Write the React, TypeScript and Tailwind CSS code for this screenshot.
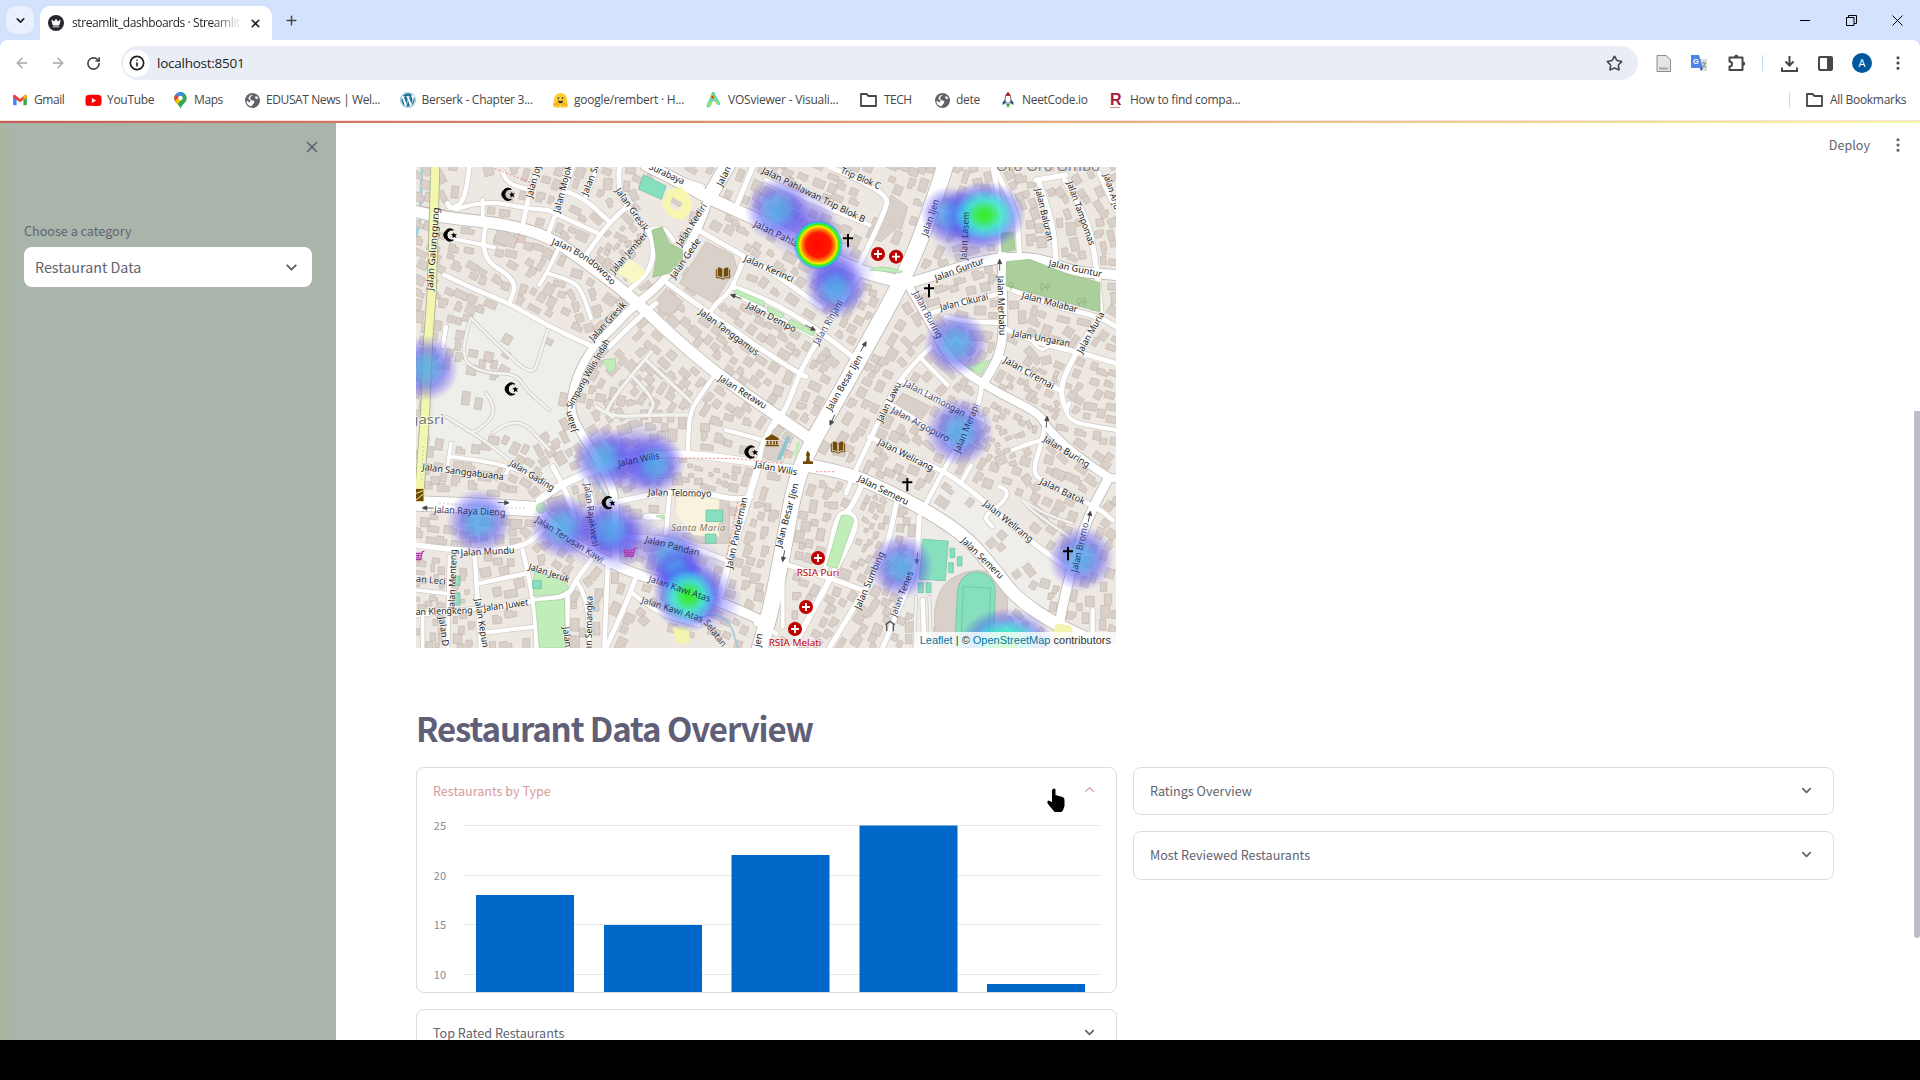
import React from "react";
import {
  ArrowLeft, ArrowRight, RotateCw, Info, Star, X, Plus, ChevronDown, ChevronUp,
  EllipsisVertical, Crown,
} from "lucide-react";
import { FaWordpress, FaYoutube } from "react-icons/fa";

type Pt = [number, number];
type Road = { w: number; p: Pt[] };

/* ---------- map data (3 units per CSS pixel) ---------- */
const r = (w: number, ...n: number[]): Road => {
  const p: Pt[] = [];
  for (let i = 0; i < n.length; i += 2) p.push([n[i], n[i + 1]]);
  return { w, p };
};

const roads: Road[] = [
  r(14, 160, 21, 150, 120, 105, 150, 95, 130), r(13, 120, 148, 200, 120, 330, 145, 395, 150), r(12, 200, 120, 200, 185),
  r(14, 365, 21, 340, 100, 320, 195), r(14, 470, 21, 435, 120, 395, 225), r(13, 395, 150, 545, 220),
  r(14, 445, 92, 500, 110, 580, 185), r(14, 545, 21, 510, 110), r(14, 632, 140, 580, 185, 510, 285),
  r(15, 610, 21, 605, 85, 632, 140, 700, 210, 715, 270, 700, 335, 645, 385), r(12, 700, 210, 740, 195, 775, 245),
  r(14, 210, 195, 185, 290, 305, 360, 280, 430), r(14, 85, 345, 180, 390, 280, 430, 400, 500, 530, 560),
  r(12, 430, 260, 400, 325, 370, 375), r(12, 395, 340, 470, 360, 500, 400, 525, 475), r(13, 260, 35, 270, 70, 340, 88),
  r(11, 110, 235, 235, 262), r(13, 90, 500, 80, 560), r(14, 640, 405, 545, 350, 510, 285),
  r(15, 755, 370, 850, 440, 940, 500, 1050, 578, 1150, 640, 1170, 650), r(15, 855, 215, 950, 270, 1050, 325, 1130, 380, 1215, 440),
  r(15, 950, 380, 1050, 415, 1200, 505, 1310, 590), r(10, 960, 405, 1050, 450, 1190, 530), r(14, 985, 290, 950, 390, 900, 430, 880, 460),
  r(15, 1010, 21, 960, 140), r(14, 800, 60, 860, 80), r(15, 580, 560, 660, 480, 720, 430), r(13, 1050, 60, 1200, 130, 1360, 195),
  r(15, 1240, 21, 1420, 95, 1405, 160, 1330, 315), r(15, 1330, 340, 1280, 420, 1200, 550, 1150, 640, 1110, 750, 1070, 800),
  r(14, 1730, 21, 1750, 110, 1755, 290), r(15, 1735, 21, 1780, 110, 1805, 180, 1810, 280), r(15, 1530, 140, 1640, 170, 1755, 180),
  r(16, 1870, 70, 1910, 180, 1920, 300), r(15, 1860, 60, 1950, 45), r(16, 1945, 60, 2010, 160, 2040, 300, 2055, 460), r(14, 2050, 40, 2100, 150),
  r(14, 1545, 460, 1650, 425, 1755, 400), r(14, 1590, 470, 1640, 485, 1755, 488), r(15, 1765, 380, 1900, 435, 2050, 470, 2100, 500),
  r(16, 2050, 470, 1970, 590, 1930, 690, 1950, 750), r(15, 1765, 505, 1850, 545, 2000, 580, 2100, 610), r(15, 1755, 590, 1850, 650, 1930, 690),
  r(10, 1850, 545, 1870, 570, 1895, 565, 1900, 550), r(14, 1545, 560, 1450, 650, 1385, 790, 1310, 950, 1290, 1000), r(13, 1455, 660, 1600, 740, 1700, 780),
  r(12, 1510, 590, 1595, 675), r(14, 1700, 660, 1690, 750, 1610, 880, 1525, 1040), r(13, 1420, 730, 1520, 790, 1600, 850),
  r(15, 1360, 830, 1480, 890, 1590, 935, 1700, 1020, 1850, 1150, 1950, 1220), r(12, 1665, 915, 1640, 960), r(12, 1750, 980, 1780, 990, 1760, 1030, 1700, 1070, 1730, 1100),
  r(14, 1890, 780, 1880, 840, 1850, 930, 1870, 960, 2040, 1040, 2090, 1080), r(12, 1960, 730, 1930, 780, 2100, 810), r(12, 1880, 840, 1840, 850, 1790, 870),
  r(15, 1440, 1030, 1420, 1160, 1340, 1300, 1240, 1464), r(15, 1510, 1070, 1505, 1220, 1450, 1340, 1400, 1464),
  r(16, 1335, 980, 1300, 1060, 1265, 1060, 1240, 1180, 1225, 1240), r(18, 1300, 1060, 1325, 1075, 1300, 1150, 1240, 1260, 1130, 1464), r(15, 1100, 1210, 1230, 1250, 1340, 1290),
  r(14, 1020, 1390, 1080, 1420), r(14, 1520, 1320, 1525, 1464), r(13, 2030, 1350, 2030, 1464),
  r(22, 370, 1020, 420, 980, 560, 920, 680, 885, 820, 880, 1000, 905, 1160, 930), r(11, 100, 890, 280, 910, 400, 985), r(11, 105, 850, 95, 920),
  r(11, 270, 940, 290, 900), r(15, 410, 920, 450, 990, 475, 1070), r(14, 510, 960, 540, 1060, 530, 1190), r(16, 590, 1030, 700, 1000, 850, 995, 960, 1020, 1005, 1010),
  r(13, 760, 1010, 750, 1120), r(18, 690, 1070, 750, 1070), r(15, 610, 1130, 750, 1130, 850, 1170, 930, 1200), r(20, 1030, 910, 980, 1070, 940, 1200, 910, 1310),
  r(16, 0, 1155, 130, 1175, 320, 1165, 380, 1110), r(14, 175, 1175, 195, 1464), r(14, 320, 1170, 355, 1320, 362, 1464), r(13, 190, 1270, 330, 1240),
  r(14, 190, 1350, 355, 1320, 455, 1310, 480, 1260, 525, 1200), r(14, 455, 1310, 452, 1464), r(13, 0, 1365, 190, 1345), r(12, 190, 1420, 355, 1400), r(13, 480, 1260, 515, 1310, 520, 1464),
  r(14, 575, 1220, 565, 1464), r(15, 660, 1250, 640, 1310, 570, 1464), r(13, 650, 1300, 720, 1360, 850, 1395), r(11, 20, 1370, 20, 1464), r(11, 100, 1190, 95, 1464), r(11, 0, 1290, 90, 1300),
  r(13, 900, 640, 850, 710, 820, 760, 815, 880),
  r(13, 930, 810, 1040, 840), r(15, 1090, 760, 1040, 840, 1030, 900), r(12, 1100, 1240, 1100, 1400),
];

const majors: Road[] = [
  r(34, 0, 155, 60, 170, 270, 192, 400, 230, 500, 300, 640, 405, 760, 520, 900, 640, 1050, 745, 1180, 835),
  r(36, 690, 15, 800, 70, 890, 120, 1050, 190, 1170, 255, 1330, 335, 1450, 365),
  r(44, 935, 15, 880, 110), r(24, 880, 110, 850, 215, 740, 370, 650, 440, 590, 505, 530, 560, 480, 650, 460, 750, 495, 820, 565, 930, 600, 1010, 598, 1210),
  r(48, 1590, 10, 1530, 200, 1455, 370, 1350, 560, 1250, 740, 1180, 860, 1135, 980, 1105, 1150, 1065, 1350, 1030, 1470),
  r(30, 1460, 375, 1560, 345, 1700, 300, 1820, 290, 1900, 305, 1970, 335, 2100, 345),
  r(26, 1757, 280, 1765, 500, 1750, 590, 1705, 665), r(24, 1485, 390, 1550, 500, 1590, 580, 1650, 640, 1750, 700, 1870, 760, 1890, 800, 1960, 870, 2080, 955, 2100, 955),
  r(38, 1160, 915, 1270, 930, 1400, 985, 1530, 1050, 1650, 1130, 1730, 1220, 1800, 1315, 1930, 1400, 2100, 1475),
  r(28, 2075, 960, 2020, 1060, 1980, 1180, 1950, 1290, 1930, 1390),
  r(44, 0, 1030, 200, 1038, 370, 1048), r(28, 365, 1045, 420, 1115, 560, 1200, 680, 1250, 900, 1320, 1045, 1385),
];

const openLanes: Road[] = [
  r(8, 165, 475, 250, 560, 350, 650, 370, 590, 395, 510), r(8, 165, 475, 125, 590, 200, 640, 300, 640, 330, 690, 400, 750), r(8, 210, 700, 250, 750, 180, 820, 150, 810),
  r(8, 90, 770, 190, 830, 280, 900), r(8, 230, 820, 300, 760, 400, 870), r(7, 1820, 1020, 1880, 1060, 1970, 1090), r(7, 1820, 1020, 1830, 1040, 1960, 1130),
  r(7, 1500, 1310, 1495, 1464), r(7, 1540, 1310, 1545, 1464),
  r(10, 707, 575, 560, 745, 590, 772), r(10, 690, 600, 830, 730), r(10, 540, 740, 580, 772, 690, 765, 830, 765), r(10, 650, 650, 720, 720, 700, 760),
];

/* areas that stay almost free of buildings: cx, cy, rx, ry */
const open: number[][] = [
  [310, 530, 170, 85], [420, 620, 110, 100], [150, 740, 120, 130], [330, 730, 110, 120], [200, 60, 90, 90], [780, 130, 110, 100], [740, 300, 90, 80], [880, 330, 130, 120],
  [1900, 370, 170, 80], [1400, 180, 90, 170], [1720, 1060, 130, 70], [1800, 1170, 150, 90], [1650, 1250, 180, 190], [380, 1350, 90, 120], [850, 1090, 100, 90], [1270, 1150, 50, 90], [800, 1430, 180, 60], [1480, 740, 70, 60],
  [90, 1090, 60, 20], [640, 1180, 35, 30], [990, 830, 60, 40], [1900, 1200, 60, 60],
];

/* tightly packed blocks */
const dense: number[][] = [
  [760, 950, 200, 50], [1820, 760, 130, 60], [1740, 830, 90, 70], [1380, 1130, 60, 130], [1850, 680, 120, 50], [620, 240, 90, 60], [60, 1330, 100, 130],
];

const inside = (list: number[][], x: number, y: number) =>
  list.some((o) => ((x - o[0]) / o[2]) ** 2 + ((y - o[1]) / o[3]) ** 2 < 1);

const all = [...roads, ...majors];
const pathOf = (p: Pt[]) => {
  let d = `M${p[0][0]} ${p[0][1]}`;
  for (let i = 1; i < p.length - 1; i++) {
    const mx = (p[i][0] + p[i + 1][0]) / 2;
    const my = (p[i][1] + p[i + 1][1]) / 2;
    d += `Q${p[i][0]} ${p[i][1]} ${mx} ${my}`;
  }
  const e = p[p.length - 1];
  return d + `L${e[0]} ${e[1]}`;
};

function makeBuildings(): string {
  let s = 9871;
  const rnd = () => {
    s = (s * 1664525 + 1013904223) % 4294967296;
    return s / 4294967296;
  };
  const placed: number[][] = [];
  let d = "";
  for (let k = 0; k < 15000; k++) {
    const x = rnd() * 2100;
    const y = 15 + rnd() * 1450;
    const packed = inside(dense, x, y);
    const f = packed ? 0.72 : 1.08;
    const w = (18 + rnd() * 19) * f;
    const h = (15 + rnd() * 12) * f;
    const keep = rnd();
    if (keep > 0.03 && inside(open, x, y)) continue;
    const rad = Math.max(w, h) / 2;
    if (placed.some((q) => Math.hypot(q[0] - x, q[1] - y) < (q[2] + rad) * (packed ? 0.86 : 0.94) + 1)) continue;
    let best = 1e9;
    let ang = 0;
    for (const road of all) {
      for (let i = 1; i < road.p.length; i++) {
        const [ax, ay] = road.p[i - 1];
        const [bx, by] = road.p[i];
        const dx = bx - ax;
        const dy = by - ay;
        const t = Math.max(0, Math.min(1, ((x - ax) * dx + (y - ay) * dy) / (dx * dx + dy * dy)));
        const dist = Math.hypot(x - ax - t * dx, y - ay - t * dy) - road.w / 2;
        if (dist < best) {
          best = dist;
          ang = Math.atan2(dy, dx);
        }
      }
    }
    if (best < h / 2 + 3) continue;
    placed.push([x, y, rad]);
    const c = Math.cos(ang);
    const n = Math.sin(ang);
    const pt = (u: number, v: number) => `${(x + u * c - v * n).toFixed(1)} ${(y + u * n + v * c).toFixed(1)}`;
    const a = w / 2;
    const b = h / 2;
    d += keep > 0.7
      ? `M${pt(-a, -b)}L${pt(a * 0.3, -b)}L${pt(a * 0.3, -b * 0.4)}L${pt(a, -b * 0.4)}L${pt(a, b)}L${pt(-a, b)}Z`
      : `M${pt(-a, -b)}L${pt(a, -b)}L${pt(a, b)}L${pt(-a, b)}Z`;
  }
  return d;
}
const buildings = makeBuildings();

/* street names: text, baseline start, baseline end */
type Label = [string, number, number, number, number];
const labels: Label[] = [
  ["Jalan Galunggung", 50, 392, 70, 143], ["Jalan Joy", 348, 115, 376, 15], ["Jalan Mojok", 430, 160, 468, 18], ["Jalan Sit", 514, 108, 552, 12],
  ["Jalan Gresik", 597, 92, 684, 216], ["Jalan Jember", 595, 342, 696, 226], ["Jalan Kediri", 795, 260, 874, 138], ["Jalan Gede", 776, 358, 855, 243],
  ["Surabaya", 697, 26, 800, 74], ["Jalan", 918, 80, 946, 25], ["Jalan Gresik", 532, 545, 632, 436], ["Jalan Tanggamus", 847, 460, 1020, 588],
  ["Simpang Wilis Indah", 466, 748, 582, 544], ["Jalan Retawu", 905, 660, 1045, 748], ["Jalan Kerinci", 982, 302, 1128, 367], ["Jalan Dempo", 990, 442, 1134, 518],
  ["Jalan Pahlawan Trip Blok B", 1036, 38, 1342, 188], ["Trip Blok C", 1272, 38, 1388, 88],
  ["Jalan Ijen", 1534, 230, 1570, 122], ["Jalan Guntur", 1560, 364, 1706, 310], ["Jalan Guntur", 1897, 318, 2056, 352],
  ["Jalan Baluran", 1858, 88, 1894, 244], ["Jalan Tampomas", 1952, 68, 2020, 258], ["Jalan Arju", 2062, 45, 2096, 150], ["Jalan Cikurai", 1574, 452, 1718, 418],
  ["Jalan Malabar", 1816, 414, 1982, 458], ["Jalan Merbabu", 1744, 348, 1750, 526], ["Jalan Muria", 1998, 582, 2066, 462], ["Jalan Ungaran", 1787, 528, 1960, 560],
  ["Jalan Ciremai", 1761, 606, 1908, 688], ["Jalan Besar Ijen", 1246, 754, 1340, 592], ["Jalan Lawu", 1398, 788, 1456, 672],
  ["Jalan", 484, 812, 464, 752], ["Jalan Sanggabuana", 18, 930, 262, 960], ["Jalan Gading", 278, 914, 408, 994],
  ["Jalan Telomoyo", 696, 1006, 886, 1010], ["Jalan Panderman", 948, 1226, 994, 1014],
  ["Jalan Mundu", 134, 1188, 296, 1180], ["Jalan Menteng", 116, 1348, 122, 1168],
  ["Jalan Leci", -30, 1262, 88, 1274], ["Jalan Jeruk", 336, 1228, 456, 1268], ["Jalan Juwet", 204, 1354, 338, 1336], ["Jalan Klengkeng", -30, 1366, 170, 1360],
  ["Jalan Kepun", 176, 1318, 200, 1464], ["Jalan D", 68, 1372, 80, 1460], ["Jalan Semangka", 526, 1500, 530, 1308], ["Jalan", 440, 1402, 448, 1462],
  ["Jalan Wilis", 1015, 922, 1142, 946], ["Jalan Welirang", 1384, 852, 1546, 934],
  ["Jalan Semeru", 1324, 962, 1472, 1036], ["Jalan Besar Ijen", 1096, 1164, 1148, 972], ["Jalan Welirang", 1700, 1034, 1842, 1148], ["Jalan Buring", 1880, 842, 2014, 924],
  ["Jalan Batok", 1870, 970, 2002, 1034], ["Jalan Semeru", 1634, 1144, 1752, 1258], ["Jalan Sumbing", 1332, 1350, 1406, 1180],
  ["jen", 1032, 1462, 1040, 1422],
];

/* street names that cross a heat spot */
const tintedLabels: Label[] = [
  ["Jalan Pahlawan", 1012, 198, 1190, 284], ["Jalan Rinjani", 1207, 556, 1282, 428], ["Jalan Lasem", 1652, 300, 1660, 156], ["Jalan Buring", 1490, 400, 1564, 538],
  ["Jalan Lamongan", 1462, 676, 1642, 770], ["Jalan Argopuro", 1424, 756, 1594, 846], ["Jalan Merapi", 1630, 880, 1690, 736], ["Jalan Wilis", 608, 920, 732, 896],
  ["Jalan Raya Dieng", 54, 1058, 268, 1067], ["Jalan Terusan Kawi", 356, 1084, 556, 1210], ["Jalan Rajakwesi", 504, 972, 530, 1160], ["Jalan Pandan", 686, 1146, 848, 1188],
  ["Jalan Kawi Atas", 696, 1264, 880, 1326], ["Jalan Kawi Atas", 674, 1328, 858, 1386], ["Selatan", 862, 1388, 918, 1462], ["Jalan Bromo", 1984, 1238, 2018, 1090], ["Jalan Tenes", 1440, 1372, 1492, 1238],
];

const StreetNames = ({ list }: { list: Label[] }) => (
  <>
    {list.map(([t, x1, y1, x2, y2], i) => (
      <text key={i} textLength={Math.hypot(x2 - x1, y2 - y1)} lengthAdjust="spacingAndGlyphs" transform={`translate(${x1} ${y1}) rotate(${(Math.atan2(y2 - y1, x2 - x1) * 180) / Math.PI})`}>
        {t}
      </text>
    ))}
  </>
);

/* heat spots: x, y, radius, strength */
const heat: number[][] = [
  [1150, 185, 110, 0], [1185, 215, 95, 0], [1275, 345, 100, 0], [1235, 310, 90, 0], [670, 900, 120, 0], [640, 900, 100, 0], [520, 1120, 100, 0], [820, 1250, 120, 0], [660, 1130, 80, 0], [1660, 200, 120, 0], [600, 1150, 90, 0],
  [1085, 150, 100, 1], [1258, 385, 95, 1], [1600, 165, 88, 1], [1620, 550, 100, 1], [30, 625, 100, 1], [1630, 815, 105, 1],
  [565, 895, 98, 1], [715, 912, 94, 1], [190, 1085, 100, 1], [440, 1100, 100, 1], [585, 1110, 98, 1], [765, 1190, 98, 1], [1455, 1220, 98, 1], [1995, 1195, 100, 1], [890, 1320, 90, 0],
];

const Mosque = ({ x, y }: { x: number; y: number }) => (
  <g transform={`translate(${x + 2} ${y})`}>
    <path d="M9 -15A18 18 0 1 0 9 15A15.500 15.500 0 1 1 9 -15Z" stroke="#000" strokeWidth="3" />
    <path d="M10 -8l3 6 7-1-5 5 4 7-7-3-6 4 1-7-5-5 6 0z" />
  </g>
);
const Cross = ({ x, y }: { x: number; y: number }) => (
  <path d={`M${x} ${y - 20}v40M${x - 15} ${y - 7}h30`} stroke="#000" strokeWidth="6" />
);
const Hospital = ({ x, y }: { x: number; y: number }) => (
  <g>
    <circle cx={x} cy={y} r="21" fill="#bf0000" />
    <path d={`M${x} ${y - 12}v24M${x - 12} ${y}h24`} stroke="#fff" strokeWidth="5.5" />
  </g>
);
const Book = ({ x, y }: { x: number; y: number }) => (
  <g transform={`translate(${x} ${y})`} fill="#734a08">
    <path d="M-2 -13Q-8 -18 -16 -17V9Q-8 8 -2 13ZM2 -13Q8 -18 16 -17V9Q8 8 2 13Z" />
    <path d="M-20 -12v25q14-1 20 5q6-6 20-5v-25" fill="none" stroke="#734a08" strokeWidth="3" />
  </g>
);
const Arrow = ({ x, y, a }: { x: number; y: number; a: number }) => (
  <path d="M-17 0H6M4 -6L17 0L4 6Z" fill="#444" stroke="#444" strokeWidth="2.5" transform={`translate(${x} ${y}) rotate(${a})`} />
);
const Cart = ({ x, y }: { x: number; y: number }) => (
  <path d="M20 -17h-6l-5 24h-26M12 -12h-30l4 14h23M11 -5h-27M3 -12l-2 14M-6 -12v14M5 13h-2M-11 13h-2" transform={`translate(${x} ${y})`} fill="none" stroke="#ac39ac" strokeWidth="3.500" />
);

function HeatMap() {
  const stroke = (list: Road[], extra: number, color: string) =>
    list.map((q, i) => <path key={i} d={pathOf(q.p)} strokeWidth={q.w + extra} stroke={color} fill="none" strokeLinecap="round" strokeLinejoin="round" />);
  return (
    <svg viewBox="0 21 2100 1443" preserveAspectRatio="none" className="block h-[481px] w-[700px]">
      <defs>
        <radialGradient id="cool">
          <stop offset="0" stopColor="#46a6ea" stopOpacity=".82" />
          <stop offset=".32" stopColor="#4b93ec" stopOpacity=".74" />
          <stop offset=".55" stopColor="#5560ee" stopOpacity=".6" />
          <stop offset=".78" stopColor="#5a48f4" stopOpacity=".28" />
          <stop offset="1" stopColor="#7a70f8" stopOpacity="0" />
        </radialGradient>
        <radialGradient id="haze">
          <stop offset="0" stopColor="#5a55ee" stopOpacity=".5" />
          <stop offset=".5" stopColor="#5a50f0" stopOpacity=".32" />
          <stop offset="1" stopColor="#6a60f8" stopOpacity="0" />
        </radialGradient>
        <radialGradient id="hot">
          <stop offset="0" stopColor="#ff0800" />
          <stop offset=".5" stopColor="#ff1800" />
          <stop offset=".66" stopColor="#ff8a00" />
          <stop offset=".75" stopColor="#ffe800" />
          <stop offset=".83" stopColor="#48f000" />
          <stop offset=".9" stopColor="#10dcc0" stopOpacity=".9" />
          <stop offset="1" stopColor="#3050f0" stopOpacity="0" />
        </radialGradient>
        <radialGradient id="warm">
          <stop offset="0" stopColor="#2cf018" stopOpacity=".97" />
          <stop offset=".2" stopColor="#38ee50" stopOpacity=".92" />
          <stop offset=".42" stopColor="#38e8cc" stopOpacity=".86" />
          <stop offset=".6" stopColor="#3cb4f0" stopOpacity=".7" />
          <stop offset=".76" stopColor="#4a58f4" stopOpacity=".45" />
          <stop offset="1" stopColor="#4a40f8" stopOpacity="0" />
        </radialGradient>
      </defs>
      <rect width="2100" height="1480" fill="#ede8e2" />
      <path d="M120 450L300 430L520 560L470 640L450 760L560 930L380 960L280 900L40 880L70 560Z" fill="#eeeeea" />
      <path d="M1560 920L1950 1220L1900 1400L1780 1290L1540 1070Z" fill="#f0eeea" />
      <path d="M1430 1080L1520 1080L1700 1190L1850 1380L1850 1464H1400Z" fill="#eeece8" />
      <path d="M18 21L12 180L0 230" stroke="#9fd0dc" strokeWidth="9" fill="none" />
      <path d={buildings} fill="#d9d0c9" stroke="#c3b7ad" strokeWidth="2" />
      <g fill="#d9d0c9" stroke="#c3b7ad" strokeWidth="2">
        <path d="M870 245L950 285L965 330L930 370L895 430L850 405L790 370Z" />
        <path d="M750 385L800 425L760 470L710 435Z" />
        <path d="M1425 105L1475 140L1455 210L1405 180ZM1375 170L1440 205L1395 245L1350 230Z" />
        <path d="M1460 700L1545 740L1515 780L1430 740Z" />
        <path d="M245 200L305 235L295 265L235 245ZM20 140L90 150V175L20 165Z" />
        <path d="M395 1020L440 1005L460 1070L400 1050Z" />
        <path d="M780 1010H940V1150H850L800 1130V1120H910V1040H780Z" />
        <path d="M1050 810L1110 850L1080 910L1040 890Z" />
        <path d="M1600 1260C1690 1200 1770 1240 1775 1330C1775 1390 1750 1440 1720 1464H1580C1540 1400 1550 1300 1600 1260Z" />
      </g>
      <path d="M780 1010H910V1130L830 1125L780 1060Z" fill="#f7f3dc" />
      {stroke(openLanes, 4, "#c9c6c2")}
      {stroke(openLanes, 0, "#f4f3f0")}
      {stroke(roads, 4, "#cfcac4")}
      {stroke(majors, 5, "#bdb9b4")}
      {stroke(roads, 0, "#ffffff")}
      {stroke(majors, 0, "#ffffff")}
      <path d="M58 10L47 400L35 560L28 750L10 1000" fill="none" stroke="#a9ad8c" strokeWidth="30" />
      <path d="M58 10L47 400L35 560L28 750L10 1000" fill="none" stroke="#f1f7ae" strokeWidth="25" />
      <g fill="#aacf9b" stroke="#94bd84" strokeWidth="2">
        <path d="M708 210L738 200L760 250L800 270V300L760 340L710 352L722 290Z" />
        <path d="M1772 305L1840 298L1950 340L2052 368V455L1770 378Z" />
        <path d="M1755 220L1792 215L1798 270L1757 276Z" />
      </g>
      <g fill="none" stroke="#86ad7c" strokeWidth="2">
        <path d="M1785 393v-14m-6-4a6 8 0 1 1 12 0a6 8 0 0 1-12 0M1878 398v-14m-6-5a6 8 0 1 1 12 0a6 8 0 0 1-12 0M1895 394v-12M1888 382l7-13 7 13zM1990 440v-12m-6-5a6 8 0 1 1 12 0a6 8 0 0 1-12 0M2005 438v-12M1998 426l7-13 7 13z" />
      </g>
      <g fill="#c0edb8" stroke="#a0cf9b" strokeWidth="2">
        <path d="M1276 1066q30-4 38 14l-50 145-32-8z" />
        <path d="M355 1235L440 1260L460 1285L430 1302L352 1308ZM358 1325L445 1318L450 1464H370Z" />
        <path d="M1360 330q40-20 100 5l-10 4zM960 388L1045 425V440L955 400ZM1055 440L1105 463L1095 475L1055 455ZM1125 478L1195 515L1190 528L1115 490Z" />
        <path d="M1655 620L1720 600L1695 645ZM560 600L600 595L598 625L580 640ZM720 1068L745 1065V1078Z" />
        <circle cx="375" cy="1045" r="15" />
      </g>
      <g fill="#86e0be" stroke="#66bd9c" strokeWidth="2">
        <path d="M682 44L750 78L736 118L668 88Z" />
        <path d="M1520 1138L1597 1143L1588 1262L1510 1258ZM1602 1165h14v28h-14zM1624 1190h14v28h-14zM1598 1208h14v30h-14zM1507 1268h15v30h-15zM1530 1268h15v30h-15z" />
        <path d="M1624 1300q5-64 60-64q56 6 54 64l-6 164h-116z" />
        <path d="M870 1050h50v35h-50zM868 1122h32v28h-32zM350 1262h26v24h-26zM118 1248h14v28h-14zM118 1300h14v36h-14z" />
      </g>
      <path d="M1642 1280L1724 1284L1716 1464H1634Z" fill="none" stroke="#66bd9c" strokeWidth="2" />
      <path d="M755 90L795 80L820 105L830 140L805 180L760 170L738 135ZM768 110L762 140L785 155L800 130Z" fill="#f8f7b0" fillRule="evenodd" />
      <path d="M640 295L692 335L655 372L605 338Z" fill="#f8f8c6" />
      <path d="M1920 1390l45 8 8 25-40 20-22-20zM770 1400h50v50h-40z" fill="#f4f4b0" />
      <g fill="none" stroke="#ee8080" strokeWidth="2.5" strokeDasharray="7 5">
        <path d="M235 25L350 70M300 250L312 215M735 893L960 896L1060 905M965 1025L930 1200M1200 935L1260 935M1125 845L1100 905M1020 905L1100 910" />
      </g>
      <g fill="none" stroke="#c6d6d6" strokeWidth="5" strokeDasharray="4 8">
        <path d="M70 1030L330 1045M20 1050L80 1055M22 860L16 960" />
      </g>
      <path d="M860 1370q60-20 90 40l15 54M535 950q30 60 60 80" fill="none" stroke="#9fcbd8" strokeWidth="5" />
      <path d="M1118 830L1088 900" stroke="#8fc4d0" strokeWidth="12" />
      <path d="M1148 845L1138 890" stroke="#c0edb8" strokeWidth="9" />
      <circle cx="640" cy="1183" r="28" fill="#dccfd2" />
      <g fontFamily="'Noto Sans', sans-serif" fontSize="28" fill="#1c1c1c" stroke="#fff" strokeOpacity=".7" strokeWidth="4" paintOrder="stroke" strokeLinejoin="round">
        <StreetNames list={labels} />
        <path id="bondowoso" d="M406 252Q520 292 588 378" fill="none" stroke="none" />
        <text fontSize="27.500"><textPath href="#bondowoso">Jalan Bondowoso</textPath></text>
        <g fill="#777" fontSize="38">
          <text x="-20" y="793" textLength="104" lengthAdjust="spacingAndGlyphs">gasri</text>
          <text x="1740" y="34" textLength="312" lengthAdjust="spacingAndGlyphs">Oro Oro Ombo</text>
        </g>
        <text x="766" y="1114" textLength="162" fontStyle="italic" fill="#7a7450">Santa Maria</text>
        <g fill="#bf0000">
          <text x="1142" y="1247" textLength="128" lengthAdjust="spacingAndGlyphs">RSIA Puri</text>
          <text x="1058" y="1459" textLength="158" lengthAdjust="spacingAndGlyphs">RSIA Melati</text>
        </g>
      </g>
      <Arrow x={960} y={410} a={200} /><Arrow x={1183} y={503} a={28} /><Arrow x={1342} y={560} a={-60} /><Arrow x={1751} y={315} a={-90} />
      <Arrow x={262} y={1028} a={2} /><Arrow x={36} y={1044} a={182} /><Arrow x={1249} y={780} a={115} /><Arrow x={1892} y={786} a={-85} />
      <Arrow x={2020} y={1070} a={-78} /><Arrow x={1503} y={1195} a={95} /><Arrow x={1103} y={1188} a={100} />
      <Mosque x={275} y={103} /><Mosque x={101} y={225} /><Mosque x={285} y={687} /><Mosque x={1004} y={876} />
      <Cross x={1296} y={242} /><Cross x={1539} y={392} /><Cross x={1474} y={974} />
      <Hospital x={1386} y={282} /><Hospital x={1440} y={290} /><Hospital x={1206} y={1194} /><Hospital x={1170} y={1341} /><Hospital x={1137} y={1407} />
      <Book x={921} y={340} /><Book x={1266} y={862} />
      <path d="M1048 835l20-12 20 12v5h-40zM1052 843h5v10h-5zM1062 843h5v10h-5zM1072 843h5v10h-5zM1080 843h5v10h-5zM1048 854h40v5h-40z" fill="#734a08" />
      <path d="M1175 872q-8 10-3 18l-2 14h-9v8h30v-8h-9l-2-14q6-8-5-18z" fill="#734a08" />
      <path d="M0 985h24v40H0M0 1000l22-8M0 1020l22-18" fill="#734a08" stroke="#f1f7ae" strokeWidth="3" />
      <path d="M1408 1394l14-10 14 10M1412 1392v22M1432 1392v22" fill="none" stroke="#555" strokeWidth="4" />
      {heat.map(([x, y, q, k], i) => (
        <circle key={i} cx={x} cy={y} r={q} fill={k ? "url(#cool)" : "url(#haze)"} />
      ))}
      <circle cx="785" cy="1235" r="75" fill="url(#cool)" />
      <ellipse cx="1705" cy="165" rx="125" ry="102" fill="url(#warm)" />
      <circle cx="818" cy="1308" r="108" fill="url(#warm)" />
      <ellipse cx="1770" cy="1462" rx="145" ry="118" fill="url(#warm)" />
      <g fontFamily="'Noto Sans', sans-serif" fontSize="28" fill="#171a52" fillOpacity=".85">
        <StreetNames list={tintedLabels} />
      </g>
      <circle cx="1207" cy="255" r="74" fill="url(#hot)" />
      <Cross x={1956} y={1181} />
      <Mosque x={576} y={1028} />
      <Cart x={642} y={1182} /><Cart x={5} y={1192} />
    </svg>
  );
}

/* ---------- browser chrome icons ---------- */
const Gmail = () => (
  <svg width="14" height="12" viewBox="0 0 16 14">
    <path d="M0 2v10q0 1 1 1h3V5z" fill="#4285f4" />
    <path d="M16 2v10q0 1-1 1h-3V5z" fill="#34a853" />
    <path d="M0 2.500Q0 .5 2 1l6 4.700 6-4.700q2-.5 2 1.500V4L8 9.500 0 4z" fill="#ea4335" />
    <path d="M12 3v4l4-3V2.500Q16 .5 14 1z" fill="#fbbc04" />
  </svg>
);
const MapsPin = () => (
  <svg width="13" height="17" viewBox="0 0 13 17">
    <path d="M6.500 0A6.200 6.200 0 0 0 .3 6.200C.3 11 5.500 12 6.500 17 7.500 12 12.700 11 12.700 6.200A6.200 6.200 0 0 0 6.500 0z" fill="#34a853" />
    <path d="M6.500 0A6.200 6.200 0 0 0 1.500 2.500L5 6 10 1.200A6 6 0 0 0 6.500 0z" fill="#4285f4" />
    <path d="M1.500 2.500A6 6 0 0 0 1 9L5 5.500z" fill="#ea4335" />
    <path d="M1 9q1 2 2.500 3.200L9 6 5 5z" fill="#fbbc04" />
    <circle cx="6.500" cy="6" r="2.200" fill="#fff" />
  </svg>
);
const Globe = () => (
  <svg width="15" height="15" viewBox="0 0 16 16">
    <circle cx="8" cy="8" r="8" fill="#5f6368" />
    <path d="M9 1.500L5.500 4.500 6 7.500 10 8.500 9.500 11 6.500 14.300A6.500 6.500 0 0 1 1.500 8l3.500 2 1-1.500L3.500 6 5 3 9 1.500zM14.300 6.500L11.500 6 10.500 4 12.500 3.500z" fill="#fff" />
  </svg>
);
const Hug = () => (
  <svg width="15" height="15" viewBox="0 0 16 16">
    <path d="M8 0a7 7 0 0 1 7 7l1 7q-3 3-8 1-5 2-8-1l1-7a7 7 0 0 1 7-7z" fill="#ffcb2e" />
    <path d="M5 5.500h1.500M9.500 5.500H11" stroke="#3a3b45" strokeWidth="1.800" />
    <path d="M5 8q3 1 6 0-.5 3-3 3T5 8z" fill="#3a3b45" />
    <path d="M1 13l3-2 2 2M15 13l-3-2-2 2" stroke="#f29d1c" fill="none" strokeWidth="1.300" />
  </svg>
);
const Vos = () => (
  <svg width="15" height="16" viewBox="0 0 15 16">
    <path d="M6 0q3-1 3.500 3l4 7q2 3-.5 3t-3-3L8 8.500l-2 2Q5 16 1.500 15.500-.5 14 2 10l2.500-5z" fill="#5fd7b2" />
    <path d="M2.500 14l2.500-4M9 9l3 2.500" stroke="#b5dc4e" strokeWidth="2.200" />
    <circle cx="6.500" cy="5" r="2.200" fill="#e8a72c" /><circle cx="6.500" cy="5.300" r="1" fill="#b32417" />
  </svg>
);
const Rocket = () => (
  <svg width="12" height="16" viewBox="0 0 12 16">
    <path d="M6 .5Q2 4 3.500 11h5Q10 4 6 .5z" fill="#fff" stroke="#666" />
    <path d="M6 0Q4 1.500 3.600 4h4.800Q8 1.500 6 0z" fill="#b3242b" />
    <path d="M3 7.500L.5 10.500V13L3.500 11zM9 7.500l2.500 3V13L8.500 11z" fill="#27519b" />
    <path d="M4 12h4l-2 4z" fill="#39a845" />
  </svg>
);
const RLetter = () => (
  <span className="w-2.5 border-b border-[#d0899a] text-center font-['Liberation_Sans'] text-[16px] leading-[14px] font-bold text-[#a8173c]">R</span>
);
const Fold = () => (
  <svg width="17" height="14" viewBox="0 0 17 14" fill="none" stroke="#474747" strokeWidth="1.800" strokeLinejoin="round">
    <path d="M1 1h5.500l2 2H16v10H1z" />
  </svg>
);

const bookmarks: { w: string; i: string; icon: React.ReactNode; t: string; tw: string }[] = [
  { w: "w-[72px]", i: "w-[21px]", icon: <Gmail />, t: "Gmail", tw: "tracking-[-0.45px]" },
  { w: "w-[89px]", i: "w-[22px]", icon: <FaYoutube size={17} color="#f00" />, t: "YouTube", tw: "tracking-[-0.3px]" },
  { w: "w-[71px]", i: "w-[20px]", icon: <MapsPin />, t: "Maps", tw: "tracking-[-0.4px]" },
  { w: "w-[154.5px]", i: "w-[21px]", icon: <Globe />, t: "EDUSAT News | Wel...", tw: "tracking-[-0.4px]" },
  { w: "w-[153.5px]", i: "w-[22px]", icon: <FaWordpress size={16} color="#21759b" />, t: "Berserk - Chapter 3...", tw: "tracking-[-0.28px]" },
  { w: "w-[153px]", i: "w-[21px]", icon: <Hug />, t: "google/rembert · H...", tw: "tracking-[-0.25px]" },
  { w: "w-[154px]", i: "w-[22px]", icon: <Vos />, t: "VOSviewer - Visuali...", tw: "tracking-[-0.22px]" },
  { w: "w-[75px]", i: "w-[24px]", icon: <Fold />, t: "TECH", tw: "tracking-[-0.5px]" },
  { w: "w-[67px]", i: "w-[21px]", icon: <Globe />, t: "dete", tw: "tracking-[-0.3px]" },
  { w: "w-[108px]", i: "w-[20px]", icon: <Rocket />, t: "NeetCode.io", tw: "tracking-[-0.3px]" },
  { w: "w-[140px]", i: "w-[20px]", icon: <RLetter />, t: "How to find compa...", tw: "tracking-[-0.25px]" },
];

function BrowserChrome() {
  return (
    <header className="h-[120px] shrink-0 bg-[#d3e3fd] font-['Open_Sans',sans-serif] text-[#474747]">
      <div className="flex h-10 items-center">
        <div className="ml-1.5 flex h-7 w-7 items-center justify-center rounded-[10px] bg-[#e9f1fe]">
          <ChevronDown size={13} strokeWidth={3} className="text-[#1f1f1f]" />
        </div>
        <div className="ml-1.5 flex h-[34px] w-[232px] items-center self-end rounded-t-[10px] bg-white pr-2.5 pl-2">
          <div className="flex h-4 w-4 items-center justify-center rounded-full bg-[#262730]">
            <Crown size={10} fill="#fff" className="text-white" />
          </div>
          <div className="ml-2 w-[170px] overflow-hidden bg-linear-to-r from-[#1f1f1f] from-82% to-transparent bg-clip-text text-[12px] tracking-[-0.42px] whitespace-nowrap text-transparent">
            streamlit_dashboards · Streamlit
          </div>
          <X size={13} strokeWidth={3} className="ml-auto text-[#1f1f1f]" />
        </div>
        <Plus size={15} strokeWidth={2.300} className="ml-3" />
        <div className="ml-auto flex items-center text-black">
          <svg width="10" height="11" viewBox="0 0 10 11" stroke="currentColor" className="mr-9">
            <path d="M0 5.500h10" />
          </svg>
          <svg width="11" height="11" viewBox="0 0 11 11" fill="none" stroke="currentColor" className="mr-[35px]">
            <path d="M.5 2.500h7.500v8H.5zM2.500 2.500v-2h8v8H8" />
          </svg>
          <svg width="11" height="11" viewBox="0 0 11 11" stroke="currentColor" className="mr-[17px]">
            <path d="M.5.5l10 10M10.500.5l-10 10" />
          </svg>
        </div>
      </div>
      <div className="h-20 rounded-t-lg bg-white">
        <div className="flex h-[46px] items-center">
          <ArrowLeft size={16} strokeWidth={2} className="ml-3.5 text-[#a5a5a5]" />
          <ArrowRight size={16} strokeWidth={2} className="ml-5 text-[#a5a5a5]" />
          <RotateCw size={15} strokeWidth={2.600} className="ml-5" />
          <div className="ml-5 flex h-[34px] w-[1517px] items-center rounded-full bg-[#e9eef6] pr-[15px] pl-0.5">
            <div className="flex h-[27px] w-[27px] items-center justify-center rounded-full bg-white">
              <Info size={16} strokeWidth={2.500} className="text-[#1f1f1f]" />
            </div>
            <span className="ml-[7px] text-[13.500px] tracking-[-0.25px] text-[#1f1f1f]">localhost:8501</span>
            <Star size={17} strokeWidth={2.300} className="ml-auto" />
          </div>
          <svg width="15" height="17" viewBox="0 0 15 17" className="ml-[18px]">
            <path d="M1 .5h9l4.500 4v12H1z" fill="#e4e4e4" stroke="#8d8d8d" />
            <path d="M3 12.500h9v2H3z" fill="#a8a8a8" />
          </svg>
          <svg width="17" height="17" viewBox="0 0 17 17" className="ml-5">
            <path d="M7 4h9v12H9z" fill="#dcdcdc" />
            <path d="M0 0h8l4 13H1q-1 0-1-1z" fill="#4c85e6" />
            <path d="M9 13h3l-2 3z" fill="#2c56b5" />
            <text x="2" y="9" fontSize="7.500" fontWeight="700" fill="#fff" fontFamily="Liberation Sans">G</text>
            <path d="M11 8h4M13 7v1M14.500 8q-1 4-3.500 5M12 10l3 3" stroke="#777" strokeWidth=".8" fill="none" />
          </svg>
          <svg width="17" height="18" viewBox="0 0 17 18" fill="none" stroke="currentColor" strokeWidth="2" className="ml-5">
            <path d="M1.500 3.500h13v12.500h-13v-3.500q2.500 0 2.500-2.500t-2.500-2.500z" strokeLinejoin="round" />
            <path d="M6.500 2.500a1.800 1.800 0 0 1 3.500 0zM15.500 8a1.800 1.800 0 0 1 0 3.500z" fill="currentColor" strokeWidth="1" />
          </svg>
          <div className="ml-[17px] h-4 w-px bg-[#c7d8f2]" />
          <svg width="17" height="17" viewBox="0 0 17 17" fill="none" stroke="currentColor" strokeWidth="2" className="ml-[18px]">
            <path d="M8.500 1v9.500M4.500 6.500l4 4 4-4M1 12.500V16h15v-3.500" />
          </svg>
          <svg width="15" height="15" viewBox="0 0 15 15" className="ml-5">
            <rect x="1" y="1" width="13" height="13" rx="1" fill="none" stroke="currentColor" strokeWidth="2" />
            <path d="M9 1h5v13H9z" fill="currentColor" />
          </svg>
          <div className="ml-[19px] flex h-5 w-5 items-center justify-center rounded-full bg-[#01579b] text-[11px] text-white">A</div>
          <EllipsisVertical size={18} strokeWidth={2.200} className="ml-[17px]" />
        </div>
        <div className="flex h-[28px] items-center pl-[13px] text-[12px] whitespace-nowrap">
          {bookmarks.map((b) => (
            <div key={b.t} className={`flex shrink-0 items-center ${b.w}`}>
              <span className={`flex shrink-0 items-center ${b.i}`}>{b.icon}</span>
              <span className={b.tw}>{b.t}</span>
            </div>
          ))}
          <div className="ml-auto flex items-center">
            <div className="mr-4 h-4 w-px bg-[#c7d8f2]" />
            <Fold />
            <span className="mr-[14px] ml-[7px] w-[76px] tracking-[-0.3px]">All Bookmarks</span>
          </div>
        </div>
      </div>
    </header>
  );
}

function Expander({ title, tall }: { title: string; tall?: boolean }) {
  return (
    <section className={`flex items-start justify-between rounded-lg border border-[#dcdde0] pt-[13px] pr-[19px] pl-4 text-[12.600px] leading-5 ${tall ? "h-[49px]" : "h-12"}`}>
      <span>{title}</span>
      <ChevronDown size={15} strokeWidth={2.800} className="mt-0.5" />
    </section>
  );
}

const bars = [
  { x: 60, top: 98 }, { x: 188, top: 128 }, { x: 315.500, top: 58 }, { x: 443.500, top: 28.500 }, { x: 571, top: 187 },
];
const ticks = [{ v: 25, y: 28.500 }, { v: 20, y: 78.500 }, { v: 15, y: 127.500 }, { v: 10, y: 177.500 }];

export default function App() {
  return (
    <div className="flex h-[1080px] w-[1920px] flex-col overflow-hidden bg-black">
      <BrowserChrome />
      <div className="h-[3px] shrink-0 border-t border-[#f6e3d8] bg-linear-to-r from-[#c75b59] via-[#e2a27a] to-[#f8f8a8]" />
      <div className="flex h-[917px] shrink-0 bg-white font-['Noto_Sans_CJK_SC',sans-serif] text-[#62636f]">
        <aside className="flex w-[336px] shrink-0 flex-col bg-linear-to-r from-[#a9b69f] to-[#a9b4aa] to-[12px] px-6">
          <div className="flex justify-end pt-[15px]">
            <X size={18} strokeWidth={2.300} className="-mr-[9px]" />
          </div>
          <label className="mt-[65px] text-[12.600px] leading-5">Choose a category</label>
          <div className="mt-1.5 flex h-10 items-center justify-between rounded-lg bg-white pr-3 pl-[11px] text-[14.300px]">
            <span>Restaurant Data</span>
            <ChevronDown size={17} strokeWidth={2.800} />
          </div>
        </aside>
        <main className="relative flex-1 overflow-hidden pl-20">
          <div className="absolute top-[12px] right-[13px] flex items-center">
            <span className="text-[12.600px] leading-5">Deploy</span>
            <EllipsisVertical size={18} strokeWidth={2.200} className="ml-[19px]" />
          </div>
          <div className="absolute top-[288px] right-0 h-[527px] w-1.5 rounded-b-full bg-[#bdbdcc]" />
          <div className="relative mt-11 w-[700px]">
            <HeatMap />
            <div className="absolute right-0 bottom-0 bg-white/80 px-[5px] font-['Liberation_Sans'] text-[11px] leading-4 whitespace-nowrap text-[#333]">
              <span className="text-[#0078a8]">Leaflet</span> | © <span className="text-[#0078a8]">OpenStreetMap</span> contributors
            </div>
          </div>
          <h2 className="mt-[56px] text-[33px] leading-[48px] font-semibold tracking-[-1.1px] whitespace-nowrap text-[#5f6078]">Restaurant Data Overview</h2>
          <div className="mt-[15px] grid w-[1418px] grid-cols-[701px_701px] gap-4">
            <div className="flex flex-col gap-4">
              <section className="flex h-[226px] flex-col overflow-hidden rounded-lg border border-[#dcdde0]">
                <div className="flex h-[29px] shrink-0 justify-between pt-[13px] pr-[19px] pl-4 text-[12.600px] leading-5 text-[#d99a9c]">
                  <span>Restaurants by Type</span>
                  <ChevronUp size={15} strokeWidth={2.200} className="mt-px" />
                </div>
                <svg width="699" height="196" viewBox="0 29 699 196" className="shrink-0" fontFamily="'Noto Sans CJK SC'" fontSize="11">
                  {ticks.map((t) => (
                    <g key={t.v}>
                      <path d={`M46 ${t.y + 29}H683`} stroke="#e6e8ec" />
                      <text x="29" y={t.y + 33} textAnchor="end" fill="#888b99">{t.v}</text>
                    </g>
                  ))}
                  {bars.map((b) => (
                    <rect key={b.x} x={b.x - 1} y={b.top + 29} width="98" height="220" fill="#0068c9" />
                  ))}
                </svg>
              </section>
              <Expander title="Top Rated Restaurants" />
            </div>
            <div className="flex flex-col gap-4">
              <Expander title="Ratings Overview" />
              <Expander title="Most Reviewed Restaurants" tall />
            </div>
          </div>
          <svg width="18" height="25" viewBox="0 0 18 25" className="absolute top-[665px] left-[711px]">
            <path d="M6 1q1.500-1 2.500.5V7l7 2q2 .5 2 3v6q-1 4-3 6H7.500L1 16q-1.500-3 .5-3.500L5 14V2z" fill="#000" />
          </svg>
        </main>
      </div>
    </div>
  );
}
